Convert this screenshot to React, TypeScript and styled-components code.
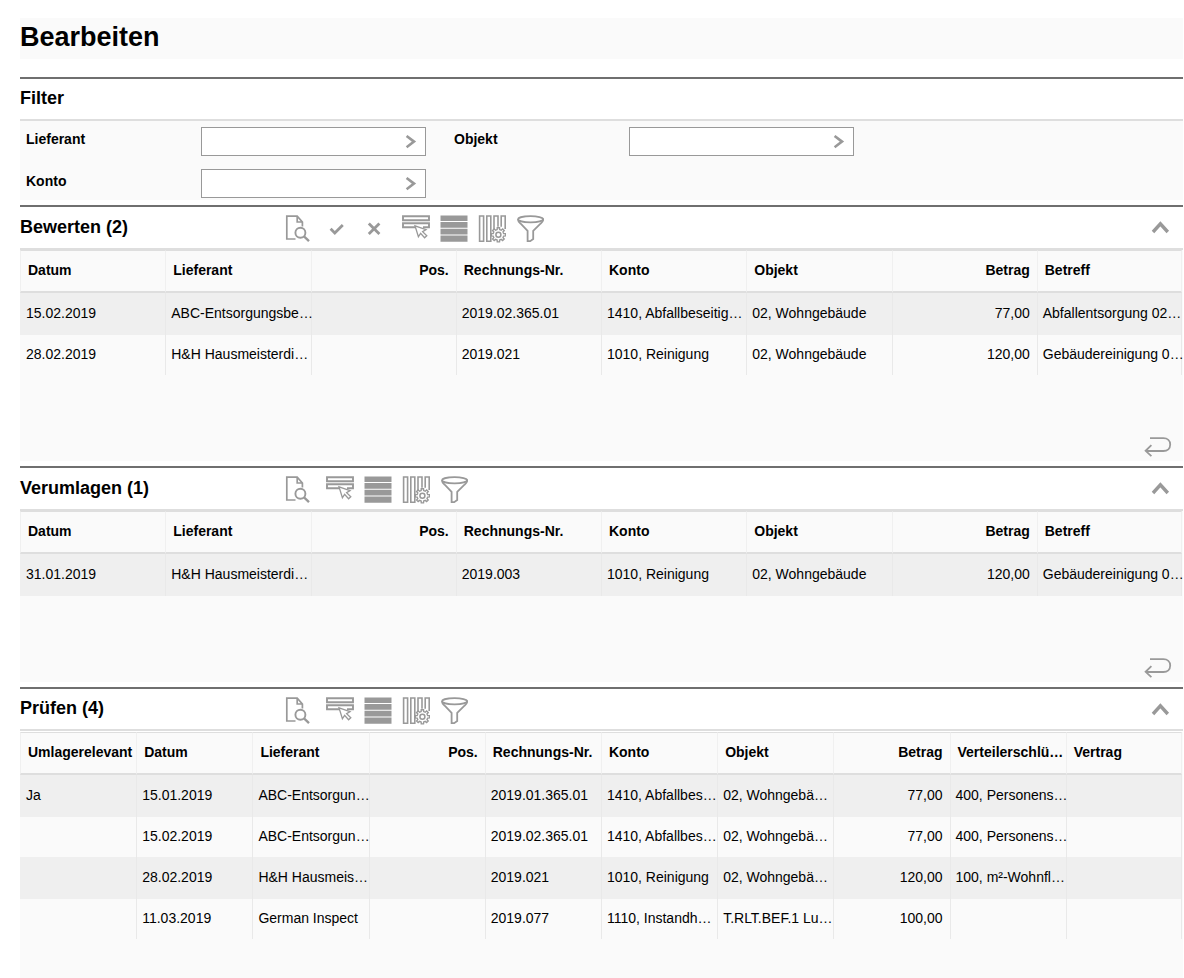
import React from "react";
import styled, { createGlobalStyle } from "styled-components";

const GlobalStyle = createGlobalStyle`
  *, *::before, *::after { box-sizing: border-box; }
  body {
    margin: 0;
    background: #fff;
    color: #000;
    font-family: "Liberation Sans", Arial, Helvetica, sans-serif;
    font-size: 14px;
  }
`;

const Page = styled.main`
  display: flex;
  flex-direction: column;
  min-height: 100vh;
  padding: 18px 1px 0 20px;
`;

const PageTitle = styled.h1`
  margin: 0 0 18px;
  padding-bottom: 3px;
  background: #fafafa;
  font-size: 27px;
  line-height: 38px;
  font-weight: bold;
`;

const Section = styled.section<{ $grow?: boolean }>`
  display: flex;
  flex-direction: column;
  flex: ${(p) => (p.$grow ? "1 0 auto" : "0 0 auto")};
  border-top: 2px solid #6f6f6f;
  margin-bottom: ${(p) => (p.$grow ? "0" : "5px")};
`;

const SectionTitle = styled.h2`
  margin: 0;
  width: 265px;
  font-size: 18px;
  line-height: 40px;
  font-weight: bold;
`;

const SectionHead = styled.header<{ $compact?: boolean }>`
  display: flex;
  align-items: flex-start;
  height: ${(p) => (p.$compact ? "42px" : "43px")};
  border-bottom: 2px solid #dedede;

  ${SectionTitle} {
    line-height: ${(p) => (p.$compact ? "38px" : "40px")};
  }
`;

const Toolbar = styled.div`
  display: flex;
  gap: 10px;
  padding-top: 8px;
`;

const IconButton = styled.button<{ $group?: boolean }>`
  display: flex;
  align-items: center;
  justify-content: center;
  width: 28px;
  height: 28px;
  padding: 0;
  margin-left: ${(p) => (p.$group ? "3px" : "0")};
  border: 0;
  background: none;
  color: #999;
  cursor: pointer;
`;

const CollapseButton = styled(IconButton)`
  margin: 6px 9px 0 auto;
`;

const Panel = styled.div<{ $gap?: boolean }>`
  display: flex;
  flex-direction: column;
  flex: 1 0 auto;
  margin-top: ${(p) => (p.$gap ? "1px" : "0")};
  background: #fafafa;
`;

const PanelFoot = styled.footer`
  display: flex;
  align-items: flex-end;
  justify-content: flex-end;
  height: 86px;
  padding: 0 11px 1px 0;
`;

const FilterPanel = styled.form`
  display: grid;
  grid-template-columns: 400px 400px;
  gap: 13px 28px;
  padding: 6px 0 2px 6px;
  background: #fafafa;
`;

const FieldRow = styled.div`
  display: flex;
  align-items: flex-start;
`;

const FieldLabel = styled.label`
  width: 175px;
  line-height: 24px;
  font-weight: bold;
`;

const Lookup = styled.div`
  display: flex;
  flex: 1;
  height: 29px;
  border: 1px solid #999;
  background: #fff;
`;

const LookupInput = styled.input`
  flex: 1;
  min-width: 0;
  border: 0;
  padding: 0 6px;
  background: none;
  font: inherit;
  outline: none;
`;

const Table = styled.table`
  width: calc(100% - 1px);
  table-layout: fixed;
  border-collapse: separate;
  border-spacing: 0;
`;

const HeadCell = styled.th<{ $end?: boolean }>`
  height: 43px;
  padding: 0 7px 3px;
  border-top: 1px solid #dedede;
  border-bottom: 2px solid #dedede;
  border-left: 1px solid #f0f0f0;
  text-align: ${(p) => (p.$end ? "right" : "left")};
  white-space: nowrap;
  font-weight: bold;

  &:last-child {
    border-right: 1px solid #f0f0f0;
  }
`;

const Row = styled.tr`
  height: 40px;
  &:nth-child(odd) {
    height: 42px;
    background: #efefef;
  }
`;

const Cell = styled.td<{ $end?: boolean }>`
  padding: 0 7px 2px 5px;
  border-left: 1px solid #e9e9e9;
  text-align: ${(p) => (p.$end ? "right" : "left")};
  white-space: nowrap;

  &:first-child {
    border-left-color: transparent;
  }
  &:last-child {
    border-right: 1px solid #e9e9e9;
  }
`;

const Svg = ({ w = 28, h = 28, sw = 2, children }: { w?: number; h?: number; sw?: number; children: React.ReactNode }) => (
  <svg width={w} height={h} viewBox={`0 0 ${w} ${h}`} fill="none" stroke="#999" strokeWidth={sw} aria-hidden="true">
    {children}
  </svg>
);

const gearOutline = (cx: number, cy: number, outer: number, inner: number, teeth: number) => {
  const step = (Math.PI * 2) / teeth;
  const at = (r: number, a: number) => `${(cx + r * Math.cos(a)).toFixed(2)} ${(cy + r * Math.sin(a)).toFixed(2)}`;
  const points: string[] = [];
  for (let i = 0; i < teeth; i++) {
    const a = i * step;
    points.push(at(inner, a - step * 0.3), at(outer, a - step * 0.2), at(outer, a + step * 0.2), at(inner, a + step * 0.3));
  }
  return `M${points.join("L")}Z`;
};

const PreviewIcon = () => (
  <Svg sw={1.7}>
    <path d="M10.5 24H1.8V1.2h10.4l5.2 5.8v4.6M12.2 1.2V7h5.2" />
    <circle cx="15.4" cy="17.8" r="5" strokeWidth="1.9" />
    <path d="M19 21.4l5 4.8" strokeWidth="2.3" />
  </Svg>
);
const CheckIcon = () => (
  <Svg sw={2.8}>
    <path d="M7.6 13.8l4.2 4.2 8-8" />
  </Svg>
);
const CrossIcon = () => (
  <Svg sw={2.8}>
    <path d="M7.8 8.4l10.6 10.6M18.4 8.4L7.8 19" />
  </Svg>
);
const RowSelectIcon = () => (
  <Svg sw={1.9}>
    <path d="M1 1.2h26v4H1zM14 12.2H1v-4h26v4h-6" />
    <path d="M13 10.8l3.4 11 2.2-3.4 4 4.4 2.2-2-4.2-4.2 3.4-2z" fill="#fff" strokeWidth="1.3" />
  </Svg>
);
const ListIcon = () => (
  <Svg>
    <path d="M0.5 0.5h27v5.6h-27zM0.5 7h27v5.8h-27zM0.5 13.8h27v5.8h-27zM0.5 20.6h27v6.2h-27z" fill="#999" stroke="none" />
  </Svg>
);
const ColumnsIcon = () => (
  <Svg sw={1.6}>
    <path d="M1.6 1h4v25.2h-4zM8.8 1h4v25.2h-4zM20 11.8V1h-4v13M23.2 11.8V1h4v13" />
    <path d={gearOutline(20.4, 19.8, 7.2, 5.4, 8)} fill="#fff" strokeWidth="1.4" />
    <circle cx="20.4" cy="19.8" r="2.5" strokeWidth="1.5" />
  </Svg>
);
const FunnelIcon = () => (
  <Svg sw={1.8}>
    <ellipse cx="14.6" cy="4.2" rx="12.6" ry="3.1" />
    <path d="M2 4.2c0 2.6 1.4 3.4 3.2 5l6.4 6.6v10.4h2.6l3-2.2v-8.2l6.8-6.6c1.8-1.6 3.2-2.4 3.2-5" />
  </Svg>
);
const ChevronUpIcon = () => (
  <Svg sw={3.4}>
    <path d="M7 19l7.4-8.2 7.4 8.2" />
  </Svg>
);
const ChevronRightIcon = () => (
  <Svg w={12} h={14} sw={2.6}>
    <path d="M1.6 1l7.4 5.6-7.4 5.6" />
  </Svg>
);
const ReturnIcon = () => (
  <Svg w={28} h={22} sw={1.8}>
    <path d="M6 1.2h13.4c4 0 6.8 2.4 6.8 6.4s-2.8 6.4-6.8 6.4H1.8M7.4 8.2L1.6 13.8l5.8 5.4" />
  </Svg>
);

const ReturnButton = styled(IconButton)`
  height: 24px;
`;

const LookupButton = styled(IconButton)`
  height: 27px;
`;

interface Column {
  title: string;
  end?: boolean;
}

const invoiceColumns: Column[] = [
  { title: "Datum" },
  { title: "Lieferant" },
  { title: "Pos.", end: true },
  { title: "Rechnungs-Nr." },
  { title: "Konto" },
  { title: "Objekt" },
  { title: "Betrag", end: true },
  { title: "Betreff" },
];

const reviewColumns: Column[] = [
  { title: "Umlagerelevant" },
  { title: "Datum" },
  { title: "Lieferant" },
  { title: "Pos.", end: true },
  { title: "Rechnungs-Nr." },
  { title: "Konto" },
  { title: "Objekt" },
  { title: "Betrag", end: true },
  { title: "Verteilerschlü…" },
  { title: "Vertrag" },
];

const assessRows = [
  ["15.02.2019", "ABC-Entsorgungsbe…", "", "2019.02.365.01", "1410, Abfallbeseitig…", "02, Wohngebäude", "77,00", "Abfallentsorgung 02…"],
  ["28.02.2019", "H&H Hausmeisterdi…", "", "2019.021", "1010, Reinigung", "02, Wohngebäude", "120,00", "Gebäudereinigung 0…"],
];

const allocateRows = [
  ["31.01.2019", "H&H Hausmeisterdi…", "", "2019.003", "1010, Reinigung", "02, Wohngebäude", "120,00", "Gebäudereinigung 0…"],
];

const reviewRows = [
  ["Ja", "15.01.2019", "ABC-Entsorgun…", "", "2019.01.365.01", "1410, Abfallbes…", "02, Wohngebä…", "77,00", "400, Personens…", ""],
  ["", "15.02.2019", "ABC-Entsorgun…", "", "2019.02.365.01", "1410, Abfallbes…", "02, Wohngebä…", "77,00", "400, Personens…", ""],
  ["", "28.02.2019", "H&H Hausmeis…", "", "2019.021", "1010, Reinigung", "02, Wohngebä…", "120,00", "100, m²-Wohnfl…", ""],
  ["", "11.03.2019", "German Inspect", "", "2019.077", "1110, Instandh…", "T.RLT.BEF.1 Lu…", "100,00", "", ""],
];

const LookupField = ({ id, label }: { id: string; label: string }) => (
  <FieldRow>
    <FieldLabel htmlFor={id}>{label}</FieldLabel>
    <Lookup>
      <LookupInput id={id} type="text" />
      <LookupButton type="button" aria-label={`${label} auswählen`}>
        <ChevronRightIcon />
      </LookupButton>
    </Lookup>
  </FieldRow>
);

interface GridSectionProps {
  title: string;
  columns: Column[];
  rows: string[][];
  decisions?: boolean;
  last?: boolean;
}

const GridSection = ({ title, columns, rows, decisions, last }: GridSectionProps) => (
  <Section $grow={last}>
    <SectionHead $compact={last}>
      <SectionTitle>{title}</SectionTitle>
      <Toolbar>
        <IconButton type="button" aria-label="Vorschau"><PreviewIcon /></IconButton>
        {decisions && (
          <>
            <IconButton type="button" aria-label="Annehmen"><CheckIcon /></IconButton>
            <IconButton type="button" aria-label="Ablehnen"><CrossIcon /></IconButton>
          </>
        )}
        <IconButton type="button" $group aria-label="Zeile wählen"><RowSelectIcon /></IconButton>
        <IconButton type="button" aria-label="Alle Zeilen"><ListIcon /></IconButton>
        <IconButton type="button" aria-label="Spalten einstellen"><ColumnsIcon /></IconButton>
        <IconButton type="button" aria-label="Filtern"><FunnelIcon /></IconButton>
      </Toolbar>
      <CollapseButton type="button" aria-label="Einklappen"><ChevronUpIcon /></CollapseButton>
    </SectionHead>
    <Panel $gap={last}>
      <Table>
        <thead>
          <tr>
            {columns.map((c) => (
              <HeadCell key={c.title} $end={c.end} scope="col">{c.title}</HeadCell>
            ))}
          </tr>
        </thead>
        <tbody>
          {rows.map((row, r) => (
            <Row key={r}>
              {row.map((value, i) => (
                <Cell key={i} $end={columns[i].end}>{value}</Cell>
              ))}
            </Row>
          ))}
        </tbody>
      </Table>
      {!last && (
        <PanelFoot>
          <ReturnButton type="button" aria-label="Zurück"><ReturnIcon /></ReturnButton>
        </PanelFoot>
      )}
    </Panel>
  </Section>
);

export default function App() {
  return (
    <>
      <GlobalStyle />
      <Page>
        <PageTitle>Bearbeiten</PageTitle>
        <Section>
          <SectionHead $compact>
            <SectionTitle>Filter</SectionTitle>
          </SectionHead>
          <FilterPanel>
            <LookupField id="supplier" label="Lieferant" />
            <LookupField id="object" label="Objekt" />
            <LookupField id="account" label="Konto" />
          </FilterPanel>
        </Section>
        <GridSection title="Bewerten (2)" columns={invoiceColumns} rows={assessRows} decisions />
        <GridSection title="Verumlagen (1)" columns={invoiceColumns} rows={allocateRows} />
        <GridSection title="Prüfen (4)" columns={reviewColumns} rows={reviewRows} last />
      </Page>
    </>
  );
}
